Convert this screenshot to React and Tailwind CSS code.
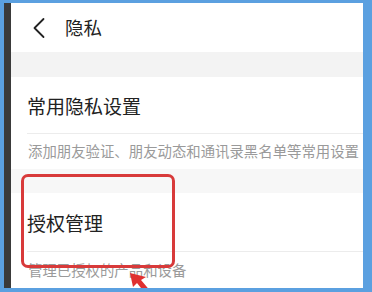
import React from 'react';

const font = { fontFamily: '"Noto Sans CJK SC", "Noto Sans", sans-serif' };

export default function App() {
  return (
    <div className="w-[372px] h-[292px] bg-[#5ba0e0] pt-[3px] pl-[4px] pr-[9px] pb-[4px] flex" style={font}>
      <div className="w-[7px] bg-[#3a3a3a]" />
      <div className="flex-1 bg-white relative overflow-hidden flex flex-col">
        {/* header */}
        <div className="h-[49px] flex items-center shrink-0">
          <svg className="ml-[21px]" width="14" height="22" viewBox="0 0 14 22" fill="none">
            <path d="M11.5 2 L2.5 11 L11.5 20" stroke="#222" strokeWidth="1.8" strokeLinecap="round" strokeLinejoin="round" />
          </svg>
          <span className="ml-[19px] text-[18.5px] text-[#222] leading-none">隐私</span>
        </div>
        <div className="h-[25px] bg-[#f3f3f3] shrink-0" />

        <div className="h-[56px] flex items-center pl-[16px] shrink-0">
          <span className="text-[19px] text-[#222] leading-none">常用隐私设置</span>
        </div>
        <div className="h-px bg-[#ececec] ml-[16px] shrink-0" />
        <div className="h-[35px] flex items-center pl-[17px] shrink-0">
          <span className="text-[14.4px] text-[#9a9a9a] leading-none whitespace-nowrap">添加朋友验证、朋友动态和通讯录黑名单等常用设置</span>
        </div>
        <div className="h-[24px] bg-[#f7f7f7] shrink-0" />

        <div className="h-[58px] flex items-center pl-[16px] shrink-0">
          <span className="text-[19px] text-[#222] leading-none">授权管理</span>
        </div>
        <div className="h-px bg-[#ececec] ml-[16px] shrink-0" />
        <div className="h-[36px] flex items-center pl-[17px] shrink-0">
          <span className="text-[14.4px] text-[#9a9a9a] leading-none whitespace-nowrap">管理已授权的产品和设备</span>
        </div>

        {/* highlight box */}
        <div className="absolute left-[10px] top-[171px] w-[154px] h-[94px] border-[3.5px] border-[#d83a3a] rounded-[7px]" />
        {/* arrow */}
        <svg className="absolute left-[115px] top-[268px]" width="26" height="22" viewBox="0 0 26 22">
          <path d="M4 2 L20 6 L15 9 L26 22 L19 22 L11 12 L7 16 Z" fill="#e03030" />
        </svg>
      </div>
    </div>
  );
}
